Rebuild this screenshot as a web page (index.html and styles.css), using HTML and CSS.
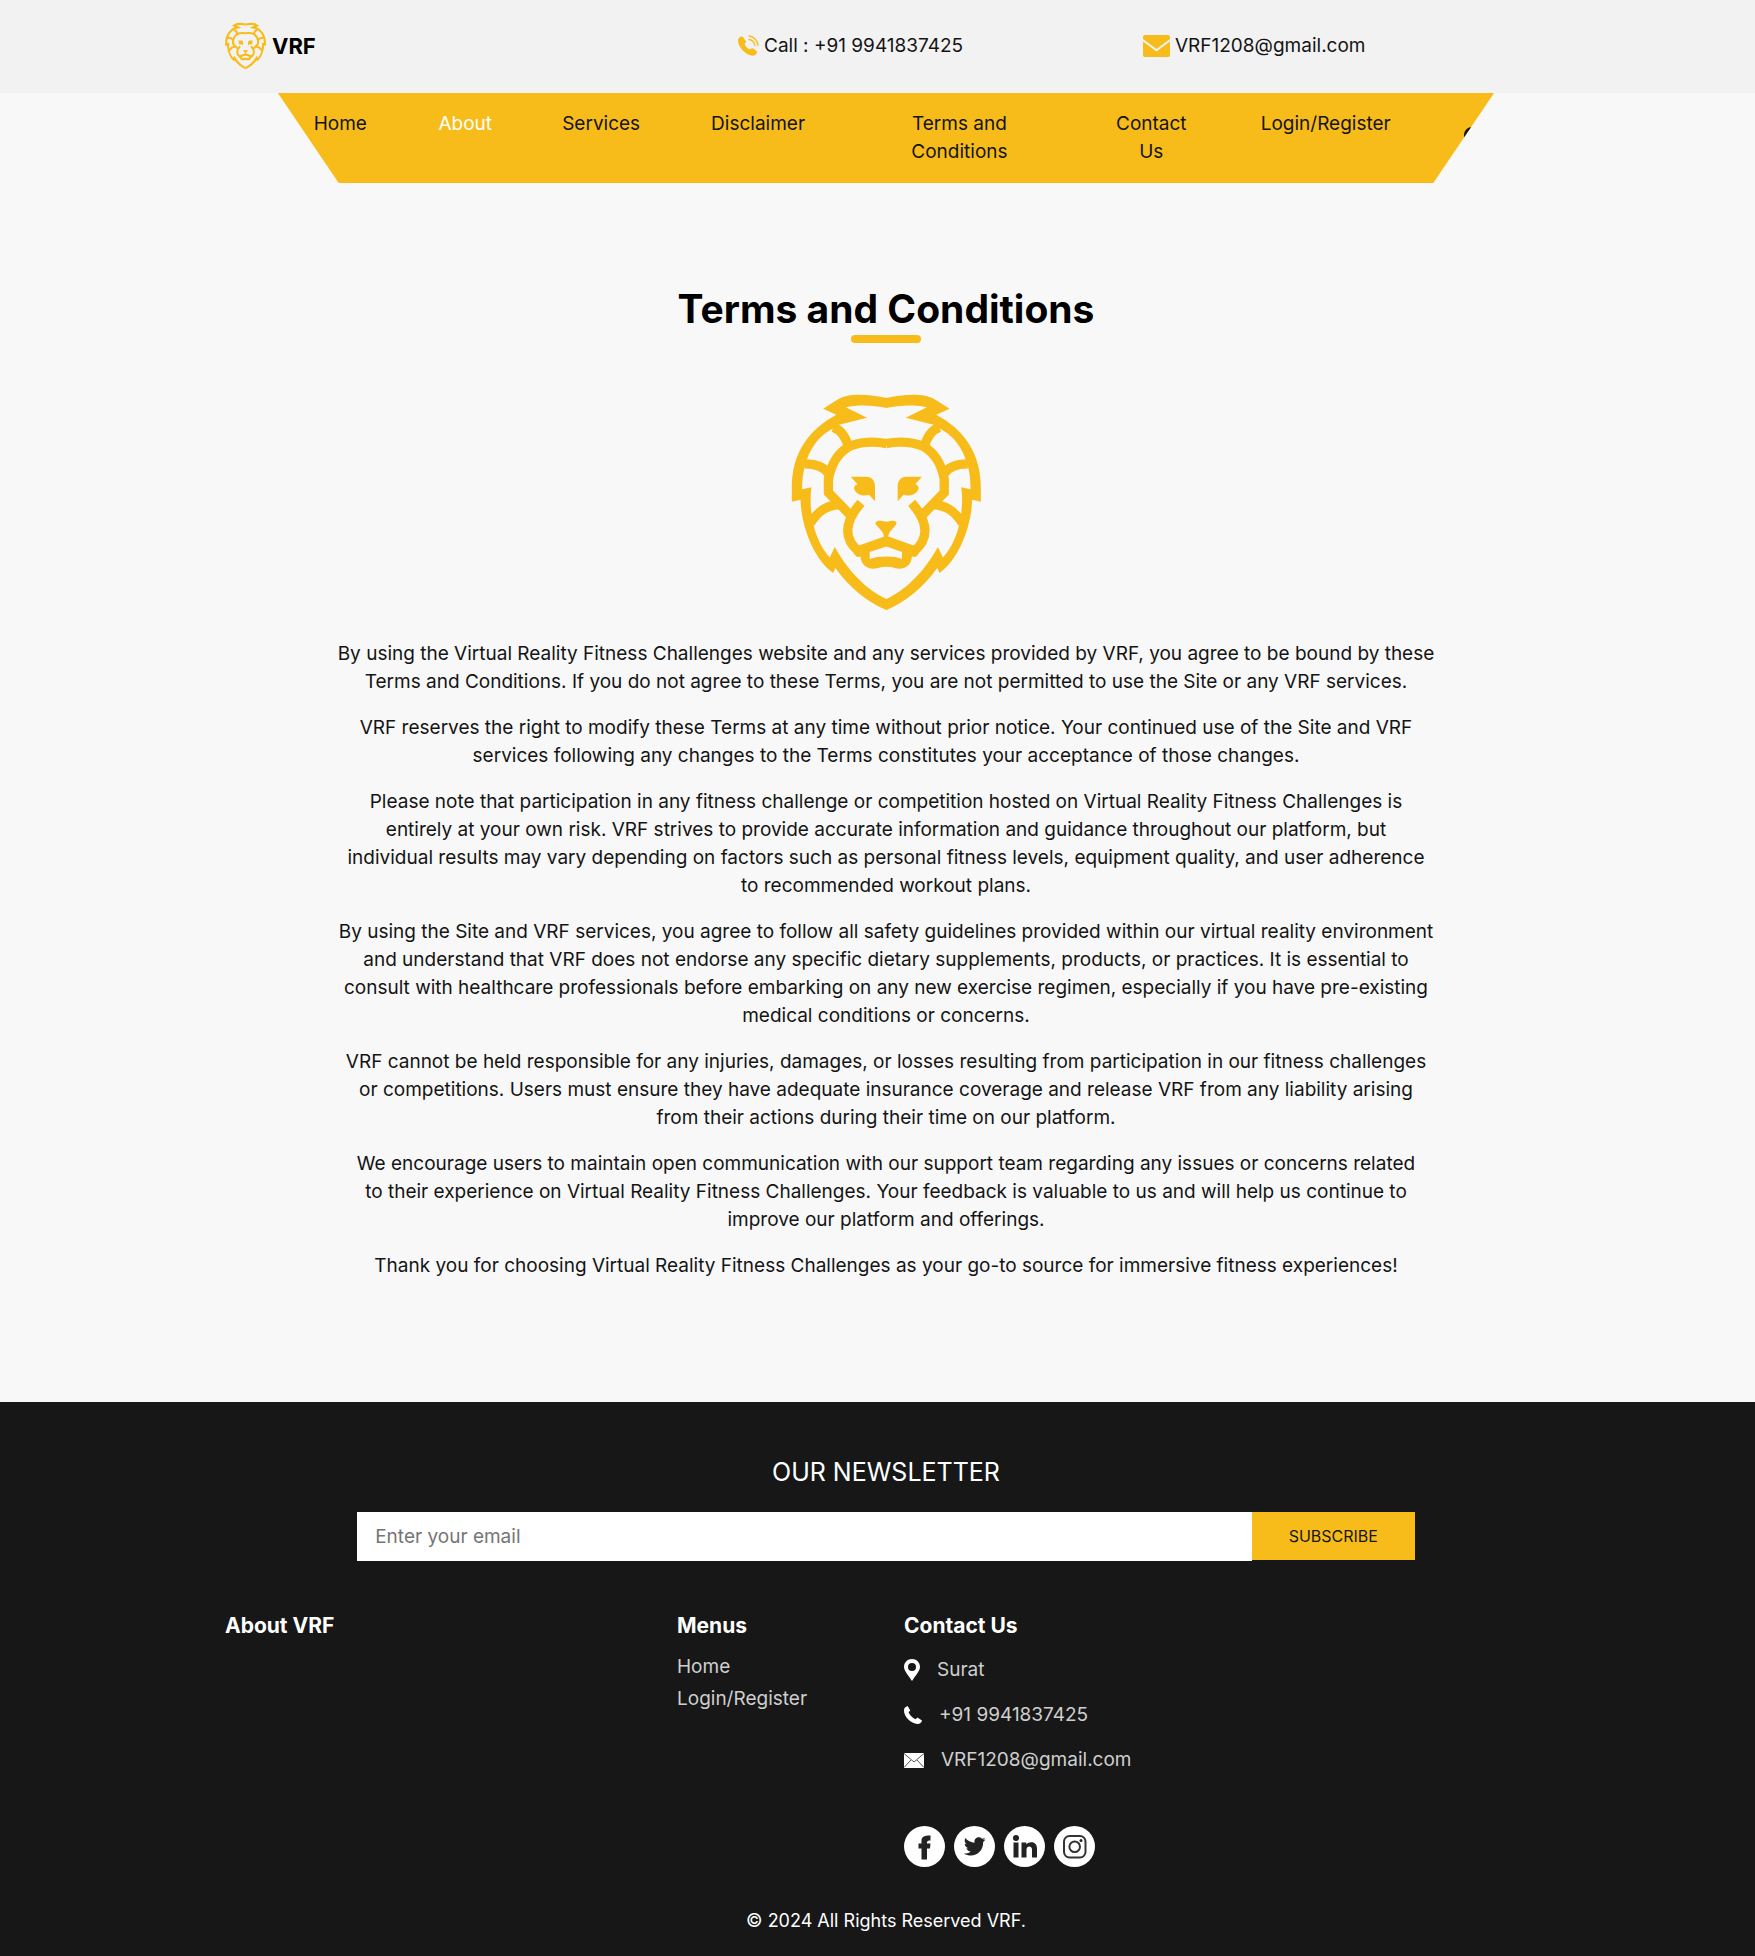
FILE: index.html
```html
<!DOCTYPE html>
<html lang="en">
<head>
<meta charset="utf-8">
<meta name="viewport" content="width=device-width, initial-scale=1">
<title>VRF - Terms and Conditions</title>
<link rel="stylesheet" href="styles.css">
</head>
<body>
<svg class="sprite" aria-hidden="true">
  <symbol id="lion" viewBox="64 42 570 652">
    <g id="lion-half">
      <path fill="currentColor" d="M351 54C300 42 235 38 205 58L160 86L200 104C115 150 66 220 66 325V366L92 360C95 440 130 535 190 580L197 565C240 625 290 665 351 692V659C290 630 235 575 195 502L180 533C150 500 138 460 133 443L125 400L123 380C122 360 122 340 125 322L97 328C97 300 100 280 103 267L112 238C125 200 150 170 175 155L205 135L292 113L228 82C260 74 310 74 351 84Z"/>
      <g fill="none" stroke="currentColor" stroke-width="28">
        <path d="M190 142C215 150 228 172 236 200"/>
        <path d="M105 252C140 252 165 262 180 285"/>
        <path d="M351 191C310 183 270 188 242 198C196 222 182 265 176 298V338L240 404"/>
        <path d="M122 430C145 393 170 378 208 374"/>
        <path d="M274 369C220 430 224 480 266 514"/>
      </g>
      <path fill="currentColor" d="M243 291H290C308 291 316 305 316 320V364L298 345C280 352 255 342 253 325C253 318 258 315 263 313Z"/>
    </g>
    <use href="#lion-half" transform="matrix(-1 0 0 1 700 0)"/>
    <path fill="currentColor" fill-rule="evenodd" d="M266 498L350 468L434 498L448 522L438 532L427 530C425 560 400 572 375 565Q350 557 325 565C300 572 275 560 272 530L262 532L252 522ZM300 517V538C325 528 375 528 397 538V517L350 500Z"/>
    <path fill="currentColor" d="M317 430C322 418 340 424 350 426C360 424 378 418 381 430C378 442 358 450 355 472H343C342 450 320 442 317 430Z"/>
  </symbol>
  <symbol id="handset" viewBox="0 0 18 18">
    <path fill="currentColor" d="M1 1.5L3.6 0L6.3 4.4L4.6 6.3C5.5 9 8.5 12 11.5 13.2L13.5 11.5L18 14.4C17.5 16.5 16 18 13.5 18C7 17.5 0 11 0 4.5C0 3.2.3 2.2 1 1.5Z"/>
  </symbol>
</svg>

<header class="topbar">
  <div class="container topbar-row">
    <a class="brand" href="#"><svg class="brand-logo" aria-hidden="true"><use href="#lion"/></svg>VRF</a>
    <a class="contact" href="#">
      <svg class="icon-call" viewBox="0 0 21 21" aria-hidden="true">
        <path fill="currentColor" d="M1.2 2.5C2.5 1.2 4.5 1 5.2 2.2L8 6.2C8.4 7.2 6.8 8.4 6.7 9.2C7.2 11 9.5 13.6 11.6 14.3C12.6 14.3 13.6 12.8 14.8 13.2L18.6 16C19.8 17.2 18.3 19.8 16.3 20.5C9 22-1.5 11.5.2 4.2Z"/>
        <path fill="none" stroke="currentColor" stroke-width="1.3" stroke-linecap="round" d="M11 1C16 1.500 19.500 5.500 20 10.500M11 4.500C14 5 16.300 7.500 16.800 10.500"/>
      </svg>
      Call : +91 9941837425</a>
    <a class="contact" href="#">
      <svg class="icon-mail" viewBox="0 0 27 22" aria-hidden="true">
        <path fill="currentColor" d="M2 0H25Q27 0 27 2V4L13.500 14L0 4V2Q0 0 2 0ZM0 6.500L13.500 16.500L27 6.500V20Q27 22 25 22H2Q0 22 0 20Z"/>
      </svg>
      VRF1208@gmail.com</a>
  </div>
</header>

<div class="container">
  <nav class="nav" aria-label="Main">
    <a href="#">Home</a>
    <a class="active" href="#">About</a>
    <a href="#">Services</a>
    <a href="#">Disclaimer</a>
    <a href="#">Terms and Conditions</a>
    <a href="#">Contact Us</a>
    <a href="#">Login/Register</a>
    <button class="search" type="button" aria-label="Search">
      <svg viewBox="0 0 20 20" aria-hidden="true"><circle cx="8" cy="8" r="6.500"/><path d="M13 13L19 19"/></svg>
    </button>
  </nav>
</div>

<main class="container terms">
  <h1>Terms and Conditions</h1>
  <svg class="terms-logo" aria-hidden="true"><use href="#lion"/></svg>
  <div class="terms-text">
    <p>By using the Virtual Reality Fitness Challenges website and any services provided by VRF, you agree to be bound by these Terms and Conditions. If you do not agree to these Terms, you are not permitted to use the Site or any VRF services.</p>
    <p>VRF reserves the right to modify these Terms at any time without prior notice. Your continued use of the Site and VRF services following any changes to the Terms constitutes your acceptance of those changes.</p>
    <p>Please note that participation in any fitness challenge or competition hosted on Virtual Reality Fitness Challenges is entirely at your own risk. VRF strives to provide accurate information and guidance throughout our platform, but individual&nbsp;results may vary depending on factors such as personal fitness levels, equipment quality, and user adherence to&nbsp;recommended workout plans.</p>
    <p>By using the Site and VRF services, you agree to follow all safety guidelines provided within our virtual reality environment and understand that VRF does not endorse any specific dietary supplements, products, or practices. It is essential to consult with healthcare professionals before embarking on any new exercise regimen, especially if you have pre-existing medical conditions or concerns.</p>
    <p>VRF cannot be held responsible for any injuries, damages, or losses resulting from participation in our fitness challenges or&nbsp;competitions. Users must ensure they have adequate insurance coverage and release VRF from any liability arising from&nbsp;their actions during their time on our platform.</p>
    <p>We encourage users to maintain open communication with our support team regarding any issues or concerns related to&nbsp;their experience on Virtual Reality Fitness Challenges. Your feedback is valuable to us and will help us continue to improve our platform and offerings.</p>
    <p>Thank you for choosing Virtual Reality Fitness Challenges as your go-to source for immersive fitness experiences!</p>
  </div>
</main>

<footer class="footer">
  <div class="container">
    <form class="newsletter">
      <h2><label for="email">OUR NEWSLETTER</label></h2>
      <div class="newsletter-row">
        <input id="email" type="email" placeholder="Enter your email">
        <button type="submit">SUBSCRIBE</button>
      </div>
    </form>
    <div class="footer-columns">
      <section>
        <h3>About VRF</h3>
      </section>
      <section>
        <h3>Menus</h3>
        <ul class="menu-list">
          <li><a href="#">Home</a></li>
          <li><a href="#">Login/Register</a></li>
        </ul>
      </section>
      <section>
        <h3>Contact Us</h3>
        <ul class="contact-list">
          <li><a href="#"><svg class="icon-pin" viewBox="0 0 16 22" aria-hidden="true"><path fill="currentColor" fill-rule="evenodd" d="M8 0C12.500 0 16 3.500 16 8C16 12 11 17 8 22C5 17 0 12 0 8C0 3.500 3.500 0 8 0ZM8 4A4 4 0 1 0 8 12A4 4 0 1 0 8 4Z"/></svg>Surat</a></li>
          <li><a href="#"><svg class="icon-handset" aria-hidden="true"><use href="#handset"/></svg>+91 9941837425</a></li>
          <li><a href="#"><svg class="icon-envelope" viewBox="0 0 20 15" aria-hidden="true"><path fill="currentColor" d="M0 0H20V15H0Z"/><path class="cut" d="M0 .5L10 9L20 .5M0 14.500L7 7M20 14.500L13 7"/></svg>VRF1208@gmail.com</a></li>
        </ul>
        <div class="social">
          <a href="#" aria-label="Facebook"><svg viewBox="0 0 41 41"><circle cx="20.500" cy="20.500" r="20.500"/><path class="glyph" d="M17.500 33.500V22.500H14.500V17.500H17.500V15C17.500 11 19.500 9.500 26.500 9.500V14.500C23.500 14.300 23 14.800 23 17.500H26.500L26 22.500H23V33.500Z"/></svg></a>
          <a href="#" aria-label="Twitter"><svg viewBox="0 0 41 41"><circle cx="20.500" cy="20.500" r="20.500"/><path class="glyph" d="M31.500 13.300C30.600 13.700 29.800 14 29 14.100C29.900 13.500 30.500 12.700 30.900 11.700C30 12.200 29 12.600 28 12.800C24.600 9.400 19.600 12.200 20.600 16.700C17 16.500 13.500 14.800 11.300 12C10.100 14.200 10.700 16.800 12.700 18.200C12 18.200 11.300 18 10.700 17.600C10.700 19.900 12.300 21.800 14.400 22.200C13.700 22.400 13.100 22.400 12.400 22.300C13 24.200 14.700 25.400 16.700 25.500C14.700 27.200 12.100 27.800 9.800 27.400C18.500 32.900 29.400 27.200 29.200 16C30.100 15.300 30.900 14.300 31.500 13.300Z"/></svg></a>
          <a href="#" aria-label="LinkedIn"><svg viewBox="0 0 41 41"><circle cx="20.500" cy="20.500" r="20.500"/><circle class="glyph" cx="12" cy="12" r="3"/><path class="glyph" d="M9.500 16.500H14.500V31.500H9.500ZM17.500 16.500H22.300V18.500C25 14.800 33 15 33 22.500V31.500H28V23.500C28 19.500 22.500 19.500 22.500 23.500V31.500H17.500Z"/></svg></a>
          <a href="#" aria-label="Instagram"><svg viewBox="0 0 41 41"><circle cx="20.500" cy="20.500" r="20.500"/><g class="line"><rect x="10" y="10" width="21.500" height="21.500" rx="5.500"/><circle cx="20.700" cy="20.700" r="5.300"/></g><circle class="glyph" cx="27" cy="14.500" r="1.500"/></svg></a>
        </div>
      </section>
    </div>
    <p class="copyright">© 2024 All Rights Reserved VRF.</p>
  </div>
</footer>
</body>
</html>
```
FILE: styles.css
```css
* {
  box-sizing: border-box;
}

body {
  margin: 0;
  background: #f8f8f8;
  color: #141414;
  font-family: Inter, "Open Sans", sans-serif;
  font-size: 19px;
  line-height: 28px;
}

h1, h2, h3, p, ul {
  margin: 0;
  padding: 0;
}

ul {
  list-style: none;
}

a {
  color: inherit;
  text-decoration: none;
}

svg {
  flex: none;
}

.sprite {
  display: block;
  width: 0;
  height: 0;
}

.container {
  max-width: 1339px;
  margin: 0 auto;
  padding-left: 17px;
}

/* Top bar */
.topbar {
  background: #f2f2f2;
}

.topbar-row {
  display: grid;
  grid-template-columns: 513fr 405fr 404fr;
  align-items: center;
  min-height: 93px;
  padding-bottom: 2px;
}

.brand {
  display: flex;
  align-items: center;
  gap: 6px;
  color: #000;
  font-size: 22px;
  font-weight: 700;
}

.brand-logo {
  width: 41px;
  height: 48px;
  color: #f8bc1a;
}

.contact {
  display: flex;
  align-items: center;
  gap: 5px;
}

.contact svg {
  color: #f8bc1a;
}

.icon-call {
  width: 21px;
  height: 21px;
}

.icon-mail {
  width: 27px;
  height: 22px;
}

/* Navigation */
.nav {
  display: grid;
  grid-template-columns: 125fr 125fr 147fr 167fr 236fr 148fr 201fr 68fr;
  width: 92%;
  min-height: 90px;
  margin: 0 auto;
  padding: 17px 0;
  background: #f8bc1a;
  clip-path: polygon(0 0, 100% 0, 95% 100%, 5% 100%);
  text-align: center;
}

.nav a {
  padding: 0 34px;
}

.nav .active {
  color: #fff;
}

.search {
  align-self: start;
  padding: 17px 0 0 38px;
  border: 0;
  background: none;
  text-align: left;
}

.search svg {
  display: block;
  width: 20px;
  height: 20px;
  fill: none;
  stroke: #141414;
  stroke-width: 3;
}

/* Terms */
.terms {
  display: flex;
  flex-direction: column;
  align-items: center;
  padding-top: 99px;
  padding-bottom: 122px;
  text-align: center;
}

.terms h1 {
  color: #000;
  font-size: 39px;
  line-height: 53px;
}

.terms h1::after {
  content: "";
  display: block;
  width: 70px;
  height: 8px;
  margin: 0 auto;
  border-radius: 4px;
  background: #f8bc1a;
}

.terms-logo {
  width: 190px;
  height: 217px;
  margin: 51px 0 29px;
  color: #f8bc1a;
}

.terms-text {
  display: flex;
  flex-direction: column;
  gap: 18px;
  width: 100%;
  max-width: 1100px;
}

/* Footer */
.footer {
  padding: 50px 0 21px;
  background: #171717;
  color: #fff;
}

.newsletter {
  width: 80%;
  margin: 0 auto;
  text-align: center;
}

.newsletter h2 {
  font-size: 25px;
  font-weight: 400;
  line-height: 40px;
}

.newsletter-row {
  display: flex;
  align-items: flex-start;
  margin-top: 20px;
}

.newsletter input {
  flex: 1;
  min-width: 0;
  height: 49px;
  padding: 0 18px;
  border: 0;
  background: #fff;
  font: inherit;
}

.newsletter input::placeholder {
  color: #757575;
}

.newsletter button {
  width: 163px;
  height: 48px;
  border: 0;
  background: #f8bc1a;
  color: #171717;
  font: inherit;
  font-size: 16px;
}

.footer-columns {
  display: grid;
  grid-template-columns: 452fr 227fr 643fr;
  margin-top: 51px;
}

.footer h3 {
  font-size: 21px;
}

.menu-list,
.contact-list {
  color: #cfcfcf;
}

.menu-list {
  display: flex;
  flex-direction: column;
  gap: 4px;
  margin-top: 13px;
}

.contact-list {
  display: flex;
  flex-direction: column;
  gap: 17px;
  margin-top: 16px;
}

.contact-list a {
  display: flex;
  align-items: center;
  gap: 17px;
}

.contact-list svg {
  color: #fff;
}

.icon-pin {
  width: 16px;
  height: 22px;
}

.icon-handset {
  width: 18px;
  height: 18px;
}

.icon-envelope {
  width: 20px;
  height: 15px;
}

.cut {
  fill: none;
  stroke: #555;
  stroke-width: 1;
}

.social {
  display: flex;
  gap: 9px;
  margin-top: 52px;
}

.social svg {
  display: block;
  width: 41px;
  height: 41px;
  fill: #fff;
}

.social .glyph {
  fill: #222;
}

.social .line {
  fill: none;
  stroke: #333;
  stroke-width: 2;
}

.copyright {
  margin-top: 40px;
  font-size: 18px;
  text-align: center;
}
```
